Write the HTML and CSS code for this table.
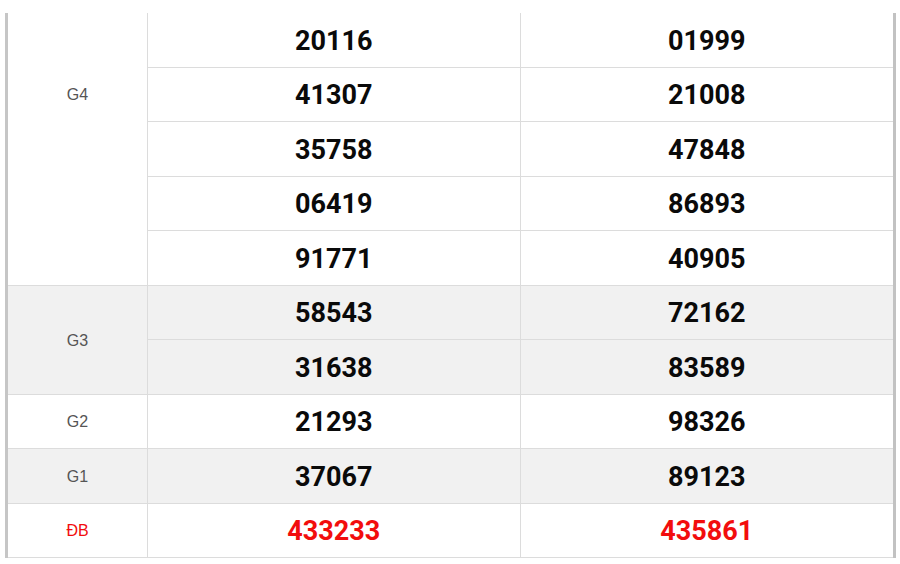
FILE: index.html
```html
<!DOCTYPE html>
<html>
<head>
<meta charset="utf-8">
<link rel="stylesheet" href="styles.css">
</head>
<body>
<table class="kq">
  <tbody>
    <tr><td class="lbl lbl-top" rowspan="5">G4</td><td class="num">20116</td><td class="num">01999</td></tr>
    <tr><td class="num">41307</td><td class="num">21008</td></tr>
    <tr><td class="num">35758</td><td class="num">47848</td></tr>
    <tr><td class="num">06419</td><td class="num">86893</td></tr>
    <tr><td class="num">91771</td><td class="num">40905</td></tr>
    <tr class="alt"><td class="lbl" rowspan="2">G3</td><td class="num">58543</td><td class="num">72162</td></tr>
    <tr class="alt"><td class="num">31638</td><td class="num">83589</td></tr>
    <tr><td class="lbl">G2</td><td class="num">21293</td><td class="num">98326</td></tr>
    <tr class="alt"><td class="lbl">G1</td><td class="num">37067</td><td class="num">89123</td></tr>
    <tr class="db"><td class="lbl">ĐB</td><td class="num">433233</td><td class="num">435861</td></tr>
  </tbody>
</table>
</body>
</html>
```
FILE: styles.css
```css
html, body {
  margin: 0;
  padding: 0;
  background: #fff;
}
.kq {
  margin: 13px 0 0 5px;
  width: 891px;
  border-collapse: separate;
  border-spacing: 0;
  border-left: 3px solid #c6c6c6;
  border-right: 3px solid #c2c2c2;
  table-layout: fixed;
}
.kq td {
  height: 51.5px;
  padding: 2px 0 0 0;
  border-bottom: 1px solid #dcdcdc;
  text-align: center;
  vertical-align: middle;
}
.kq td.lbl {
  width: 139px;
  border-right: 1px solid #dcdcdc;
  font-family: "Liberation Sans", Arial, sans-serif;
  font-size: 16px;
  color: #555;
}
.kq td.lbl-top {
  vertical-align: top;
  padding-top: 73px;
}
.kq td.num {
  font-family: Roboto, "Liberation Sans", sans-serif;
  font-weight: 700;
  font-size: 27px;
  color: #0a0a0a;
}
.kq tr td.num:nth-last-child(2) {
  border-right: 1px solid #dcdcdc;
}
.kq tr.alt td {
  background: #f1f1f1;
}
.kq tr.db td.lbl,
.kq tr.db td.num {
  color: #f20d0d;
}
```
